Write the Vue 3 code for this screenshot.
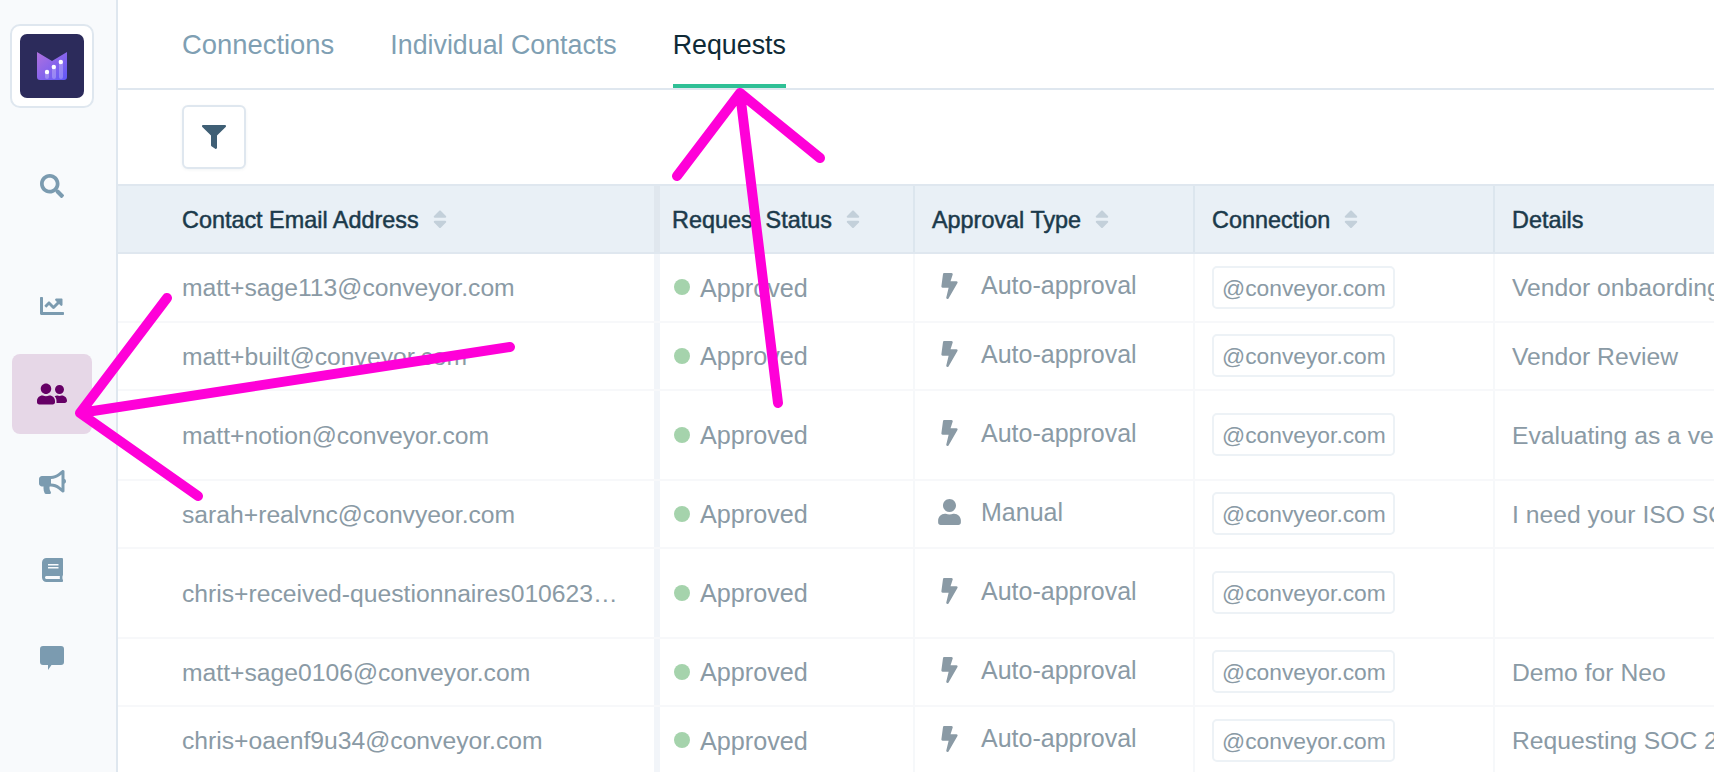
<script setup>
const sidebar = [
  { id: 'search', vb: '0 0 512 512', w: 24, d: 'M505 442.7L405.3 343c-4.5-4.5-10.6-7-17-7H372c27.6-35.3 44-79.7 44-128C416 93.1 322.9 0 208 0S0 93.1 0 208s93.1 208 208 208c48.3 0 92.7-16.4 128-44v16.3c0 6.4 2.5 12.5 7 17l99.7 99.7c9.4 9.4 24.6 9.4 33.9 0l28.3-28.3c9.4-9.4 9.4-24.6.1-34zM208 336c-70.7 0-128-57.2-128-128 0-70.7 57.2-128 128-128 70.7 0 128 57.2 128 128 0 70.7-57.2 128-128 128z' },
  { id: 'chart', vb: '0 0 512 512', w: 24, d: 'M496 384H64V80c0-8.84-7.16-16-16-16H16C7.16 64 0 71.16 0 80v336c0 17.67 14.33 32 32 32h464c8.84 0 16-7.16 16-16v-32c0-8.84-7.16-16-16-16zM464 96H345.94c-21.38 0-32.09 25.85-16.97 40.97l32.4 32.4L288 242.75l-73.37-73.37c-12.5-12.5-32.76-12.5-45.25 0l-68.69 68.69c-6.25 6.25-6.25 16.38 0 22.63l22.62 22.62c6.25 6.25 16.38 6.25 22.63 0L192 237.25l73.37 73.37c12.5 12.5 32.76 12.5 45.25 0l96-96 32.4 32.4c15.12 15.12 40.97 4.41 40.97-16.97V112c.01-8.84-7.15-16-15.99-16z' },
  { id: 'people', active: true, vb: '0 0 640 512', w: 30, d: 'M192 256c61.9 0 112-50.1 112-112S253.9 32 192 32 80 82.1 80 144s50.1 112 112 112zm76.8 32h-8.3c-20.8 10-43.9 16-68.5 16s-47.6-6-68.5-16h-8.3C51.6 288 0 339.6 0 403.2V432c0 26.5 21.5 48 48 48h288c26.5 0 48-21.5 48-48v-28.8c0-63.6-51.6-115.2-115.2-115.2zM480 256c53 0 96-43 96-96s-43-96-96-96-96 43-96 96 43 96 96 96zm48 32h-3.8c-13.9 4.8-28.6 8-44.2 8s-30.3-3.2-44.2-8H432c-20.4 0-39.2 5.9-55.7 15.4 24.4 26.3 39.7 61.2 39.7 99.8v38.4c0 2.2-.5 4.3-.6 6.4H592c26.5 0 48-21.5 48-48 0-61.9-50.1-112-112-112z' },
  { id: 'megaphone', vb: '0 0 576 512', w: 27, d: 'M576 240c0-23.63-12.95-44.04-32-55.12V32.01C544 23.26 537.02 0 512 0c-7.12 0-14.19 2.38-19.98 7.02l-85.03 68.03C364.28 109.19 310.66 128 256 128H64c-35.35 0-64 28.65-64 64v96c0 35.35 28.65 64 64 64h33.7c-1.39 10.48-2.18 21.14-2.18 32 0 39.77 9.26 77.35 25.56 110.94 5.19 10.69 16.52 17.06 28.4 17.06h74.28c26.05 0 41.69-29.84 25.9-50.56-16.4-21.52-26.15-48.36-26.15-77.44 0-11.11 1.62-21.79 4.41-32H256c54.66 0 108.28 18.81 150.98 52.95l85.03 68.03a32.023 32.023 0 0 0 19.98 7.02c24.92 0 32-22.78 32-32V295.13C563.05 284.04 576 263.63 576 240zm-96 141.42l-33.05-26.44C392.95 311.78 325.12 288 256 288v-96c69.12 0 136.95-23.78 190.95-66.98L480 98.58v282.84z' },
  { id: 'book', vb: '0 0 448 512', w: 21, d: 'M448 360V24c0-13.3-10.7-24-24-24H96C43 0 0 43 0 96v320c0 53 43 96 96 96h328c13.3 0 24-10.7 24-24v-16c0-7.5-3.5-14.3-8.9-18.7-4.2-15.4-4.2-59.3 0-74.7 5.4-4.3 8.9-11.1 8.9-18.6zM128 134c0-3.3 2.7-6 6-6h212c3.3 0 6 2.7 6 6v20c0 3.3-2.7 6-6 6H134c-3.3 0-6-2.7-6-6v-20zm0 64c0-3.3 2.7-6 6-6h212c3.3 0 6 2.7 6 6v20c0 3.3-2.7 6-6 6H134c-3.3 0-6-2.7-6-6v-20zm253.4 250H96c-17.7 0-32-14.3-32-32 0-17.6 14.4-32 32-32h285.4c-1.9 17.1-1.9 46.9 0 64z' },
  { id: 'chat', vb: '0 0 24 24', w: 24, d: 'M3 0h18a3 3 0 0 1 3 3v13a3 3 0 0 1-3 3h-9.5L8 24v-5H3a3 3 0 0 1-3-3V3a3 3 0 0 1 3-3z' }
]

const headers = [
  { label: 'Contact Email Address', cls: 'c1', sort: true },
  { label: 'Request Status', cls: 'c2', sort: true },
  { label: 'Approval Type', cls: 'c3', sort: true },
  { label: 'Connection', cls: 'c4', sort: true },
  { label: 'Details', cls: 'c5', sort: false }
]

const rows = [
  { email: 'matt+sage113@conveyor.com', type: 'Auto-approval', conn: '@conveyor.com', details: 'Vendor onbaording for SOC 2 review' },
  { email: 'matt+built@conveyor.com', type: 'Auto-approval', conn: '@conveyor.com', details: 'Vendor Review' },
  { email: 'matt+notion@conveyor.com', type: 'Auto-approval', conn: '@conveyor.com', details: 'Evaluating as a vendor for our team', tall: true },
  { email: 'sarah+realvnc@convyeor.com', type: 'Manual', conn: '@convyeor.com', details: 'I need your ISO SOC reports' },
  { email: 'chris+received-questionnaires010623…', type: 'Auto-approval', conn: '@conveyor.com', details: '', tall: true },
  { email: 'matt+sage0106@conveyor.com', type: 'Auto-approval', conn: '@conveyor.com', details: 'Demo for Neo' },
  { email: 'chris+oaenf9u34@conveyor.com', type: 'Auto-approval', conn: '@conveyor.com', details: 'Requesting SOC 2 report' }
]

const bolt = 'M296 160H180.6l42.6-129.8C227.2 15 215.7 0 200 0H56C44 0 33.8 8.9 32.2 20.8l-32 240C-1.7 275.2 9.5 288 24 288h118.7L96.6 482.5c-3.6 15.2 8 29.5 23.3 29.5 8.4 0 16.4-4.4 20.8-12l176-304c9.3-15.9-2.2-36-20.7-36z'
const person = 'M224 256c70.7 0 128-57.3 128-128S294.7 0 224 0 96 57.3 96 128s57.3 128 128 128zm89.6 32h-16.7c-22.2 10.2-46.9 16-72.9 16s-50.6-5.8-72.9-16h-16.7C60.2 288 0 348.2 0 422.4V464c0 26.5 21.5 48 48 48h352c26.5 0 48-21.5 48-48v-41.6c0-74.2-60.2-134.4-134.4-134.4z'
</script>

<template>
  <div class="page">
    <aside class="sidebar">
      <div class="logo-box">
        <div class="logo">
          <svg width="30" height="28" viewBox="0 0 30 28">
            <defs>
              <linearGradient id="lg" x1="0" y1="0" x2="1" y2="1">
                <stop offset="0" stop-color="#b071de" />
                <stop offset="1" stop-color="#5f58f8" />
              </linearGradient>
            </defs>
            <path d="M0 0l15 9 15-9v25a3 3 0 0 1-3 3H3a3 3 0 0 1-3-3z" fill="url(#lg)" />
            <rect x="8" y="19" width="4" height="8" rx="2" fill="#fff" opacity=".25" />
            <rect x="15" y="14" width="4" height="13" rx="2" fill="#fff" opacity=".25" />
            <rect x="22" y="9" width="4" height="18" rx="2" fill="#fff" opacity=".25" />
            <circle cx="10" cy="20" r="2.2" fill="#fff" />
            <circle cx="16.8" cy="15" r="2.2" fill="#fff" />
            <circle cx="23.8" cy="10" r="2.2" fill="#fff" />
          </svg>
        </div>
      </div>
      <nav class="nav">
        <div
          v-for="item in sidebar"
          :key="item.id"
          class="nav-item"
          :class="[{ active: item.active }, 'nav-' + item.id]"
        >
          <svg :width="item.w" :viewBox="item.vb" fill="currentColor"><path :d="item.d" /></svg>
        </div>
      </nav>
    </aside>

    <main class="main">
      <div class="tabs">
        <span class="tab first">Connections</span>
        <span class="tab">Individual Contacts</span>
        <span class="tab current">Requests</span>
      </div>
      <div class="toolbar">
        <button class="filter" type="button" aria-label="Filter">
          <svg width="24" height="24" viewBox="0 0 512 512" fill="currentColor"><path d="M487.976 0H24.028C2.71 0-8.047 25.866 7.058 40.971L192 225.941V432c0 7.831 3.821 15.17 10.237 19.662l80 55.98C298.02 518.69 320 507.493 320 487.98V225.941l184.947-184.97C520.021 25.896 509.338 0 487.976 0z" /></svg>
        </button>
      </div>
      <div class="table">
        <div class="row head">
          <div v-for="h in headers" :key="h.label" class="cell" :class="h.cls">
            <span class="head-label">{{ h.label }}</span>
            <svg v-if="h.sort" class="sort" width="14" height="22.5" viewBox="0 0 320 512" fill="currentColor"><path d="M41 288h238c21.4 0 32.1 25.9 17 41L177 448c-9.4 9.4-24.6 9.4-33.9 0L24 329c-15.1-15.1-4.4-41 17-41zm255-105L177 64c-9.4-9.4-24.6-9.4-33.9 0L24 183c-15.1 15.1-4.4 41 17 41h238c21.4 0 32.1-25.9 17-41z" /></svg>
          </div>
        </div>
        <div v-for="r in rows" :key="r.email" class="row body" :class="{ tall: r.tall }">
          <div class="cell c1">{{ r.email }}</div>
          <div class="cell c2"><i class="dot"></i><span class="status">Approved</span></div>
          <div class="cell c3">
            <span class="type-icon">
              <svg v-if="r.type === 'Manual'" width="23" height="26" viewBox="0 0 448 512" fill="currentColor"><path :d="person" /></svg>
              <svg v-else width="17" height="26" viewBox="0 0 320 512" fill="currentColor"><path :d="bolt" /></svg>
            </span>
            <span>{{ r.type }}</span>
          </div>
          <div class="cell c4"><span class="pill">{{ r.conn }}</span></div>
          <div class="cell c5">{{ r.details }}</div>
        </div>
      </div>
    </main>

    <svg class="arrows" width="1714" height="772" viewBox="0 0 1714 772" fill="none" stroke="#ff00d8" stroke-width="10" stroke-linecap="round" stroke-linejoin="round">
      <path d="M677 176L740 93L820 158M740 93L778 403" />
      <path d="M167 298L80 413L198 496M80 413L510 347" />
    </svg>
  </div>
</template>

<style>
html, body { margin: 0; background: #fff; }
</style>

<style scoped>
.page {
  position: relative;
  display: flex;
  width: 1714px;
  height: 772px;
  overflow: hidden;
  background: #fff;
  font-family: "Liberation Sans", Arial, sans-serif;
}
.sidebar {
  flex: none;
  box-sizing: border-box;
  width: 118px;
  height: 100%;
  padding: 24px 0 0 10px;
  background: #f8fafc;
  border-right: 2px solid #dfe7ef;
}
.logo-box {
  box-sizing: border-box;
  display: flex;
  align-items: center;
  justify-content: center;
  width: 84px;
  height: 84px;
  background: #fff;
  border: 2px solid #dfe7ef;
  border-radius: 10px;
}
.logo {
  display: flex;
  align-items: center;
  justify-content: center;
  width: 64px;
  height: 64px;
  background: #2c2b5b;
  border-radius: 7px;
}
.nav {
  display: flex;
  flex-direction: column;
  gap: 8px;
  margin: 38px 0 0 2px;
}
.nav-item {
  display: flex;
  align-items: center;
  justify-content: center;
  width: 80px;
  height: 80px;
  border-radius: 8px;
  color: #7b9bb0;
}
.nav-item svg { display: block; }
.nav-search { margin-bottom: 32px; }
.nav-item.active {
  background: #e6d7e7;
  color: #660066;
}
.main {
  flex: 1;
  min-width: 0;
  display: flex;
  flex-direction: column;
}
.tabs {
  flex: none;
  box-sizing: border-box;
  display: flex;
  gap: 56px;
  height: 90px;
  padding-left: 64px;
  border-bottom: 2px solid #dfe7ef;
}
.tab {
  box-sizing: border-box;
  height: 88px;
  padding-top: 29px;
  font-size: 26.8px;
  line-height: 32px;
  color: #7f9fb3;
}
.tab.first { font-size: 27.4px; }
.tab.current {
  color: #0f2a36;
  border-bottom: 4px solid #2fc096;
}
.toolbar {
  flex: none;
  box-sizing: border-box;
  height: 96px;
  padding: 15px 0 0 64px;
  border-bottom: 2px solid #dfe7ef;
}
.filter {
  box-sizing: border-box;
  display: flex;
  align-items: center;
  justify-content: center;
  width: 64px;
  height: 64px;
  padding: 0;
  background: #fff;
  border: 2px solid #dfe7ef;
  border-radius: 6px;
  box-shadow: 0 1px 3px rgba(30, 60, 90, .06);
  color: #3f5f75;
}
.table { flex: 1; min-height: 0; }
.row {
  box-sizing: border-box;
  display: flex;
  width: 1600px;
  height: 68.5px;
  border-bottom: 2px solid #f7f8fa;
}
.row.tall { height: 89.5px; }
.row.head {
  height: 68px;
  background: #e9f0f6;
  border-bottom: 2px solid #dfe7ef;
}
.cell {
  flex: none;
  box-sizing: border-box;
  display: flex;
  align-items: center;
  padding-left: 17px;
  border-right: 2px solid #f6f8fa;
  font-size: 24.7px;
  color: #8a9aa5;
  white-space: nowrap;
  overflow: hidden;
}
.head .cell { border-right-color: #dce6ee; color: #1b3a4b; }
.head-label {
  padding-top: 2px;
  font-size: 23.4px;
  -webkit-text-stroke: .5px #1b3a4b;
}
.sort { margin-left: 14px; color: #c3d0da; }
.c1 { width: 542px; padding-left: 64px; border-right: 6px solid #f2f5f9; }
.body .c1, .body .c5 { padding-top: 2px; }
.head .c1 { border-right-color: #e0e7ee; }
.c2 { width: 255px; padding-left: 14px; font-size: 25.2px; }
.status { padding-top: 2px; }
.head .c2 { padding-left: 12px; }
.c3 { width: 280px; padding-bottom: 3px; font-size: 25px; }
.head .c3 { padding-bottom: 0; }
.c4 { width: 300px; }
.c5 { flex: 1; border-right: 0; }
.dot {
  flex: none;
  width: 16px;
  height: 16px;
  margin-right: 10px;
  border-radius: 50%;
  background: #a5d3ac;
}
.type-icon {
  flex: none;
  display: flex;
  justify-content: center;
  width: 34px;
  margin-right: 15px;
}
.pill {
  box-sizing: border-box;
  display: flex;
  align-items: center;
  width: 183px;
  height: 43px;
  padding: 2px 8px 0;
  background: #fff;
  border: 2px solid #edf2f6;
  border-radius: 5px;
  font-size: 22.8px;
}
.arrows {
  position: absolute;
  left: 0;
  top: 0;
  pointer-events: none;
}
</style>
